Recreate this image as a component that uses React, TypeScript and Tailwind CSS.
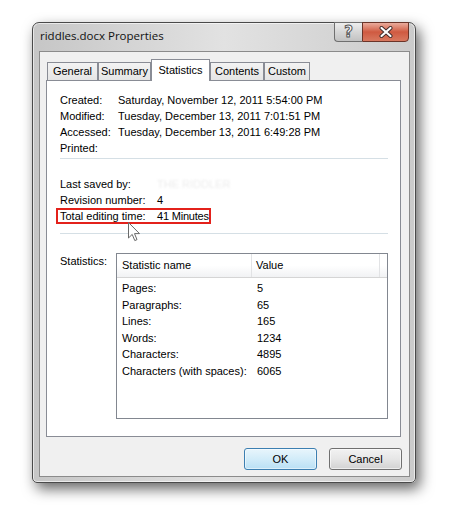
import React from "react";

const tabs = [
  { name: "General", w: "w-[51px]" },
  { name: "Summary", w: "w-[53px]" },
  { name: "Statistics", w: "w-[59px]", active: true },
  { name: "Contents", w: "w-[54px]" },
  { name: "Custom", w: "w-[46px]" },
];

const dates = [
  ["Created:", "Saturday, November 12, 2011 5:54:00 PM"],
  ["Modified:", "Tuesday, December 13, 2011 7:01:51 PM"],
  ["Accessed:", "Tuesday, December 13, 2011 6:49:28 PM"],
  ["Printed:", ""],
];

const stats = [
  ["Pages:", "5"],
  ["Paragraphs:", "65"],
  ["Lines:", "165"],
  ["Words:", "1234"],
  ["Characters:", "4895"],
  ["Characters (with spaces):", "6065"],
];

const Cursor = () => (
  <svg width="13" height="20" viewBox="0 0 13 20" className="absolute left-[128px] top-[222px]">
    <path
      d="M0.5 0.5 L0.5 16 L4.2 12.4 L6.8 18.6 L9 17.6 L6.5 11.6 L11.5 11.6 Z"
      fill="#ffffff"
      stroke="#6a6a6a"
      strokeWidth="1"
      strokeLinejoin="round"
    />
  </svg>
);

const CaptionButtons = () => (
  <div className="-mt-px mr-[6px] flex">
    <div className="flex h-[20px] w-[28px] items-center justify-center rounded-bl-[4px] border border-r-0 border-[#6f6f6f] bg-gradient-to-b from-[#eeeeee] via-[#d6d6d6] to-[#c2c2c2]">
      <span className="text-[15px] font-bold leading-none text-white [-webkit-text-stroke:1px_#555555] [font-family:'DejaVu_Sans',sans-serif]">
        ?
      </span>
    </div>
    <div className="flex h-[20px] w-[47px] items-center justify-center rounded-br-[4px] border border-[#6b3428] bg-gradient-to-b from-[#e9ab9c] via-[#cf5a41] to-[#d8785f]">
      <svg width="14" height="12" viewBox="0 0 14 12">
        <path d="M2.5 2 L11.5 10 M11.5 2 L2.5 10" stroke="#3b2a2a" strokeWidth="4" strokeLinecap="round" />
        <path d="M2.5 2 L11.5 10 M11.5 2 L2.5 10" stroke="#ffffff" strokeWidth="2.2" strokeLinecap="round" />
      </svg>
    </div>
  </div>
);

export default function App() {
  return (
    <div className="relative h-[511px] w-[461px] bg-white pl-[32px] pt-[22px] font-['Liberation_Sans',Arial,sans-serif] text-[11px] text-black">
      <div className="flex h-[461px] w-[384px] flex-col rounded-t-[7px] rounded-b-[5px] border border-[#4a4a4a] bg-gradient-to-r from-[#c6c6c6] via-[#e2e2e2] to-[#cbcbcb] shadow-[4px_6px_14px_rgba(0,0,0,0.6),inset_0_0_0_1px_rgba(255,255,255,0.6)]">
        {/* title bar */}
        <div className="flex h-[28px] items-start justify-between">
          <span className="ml-[7px] mt-[5px] font-['Open_Sans','Noto_Sans',sans-serif] text-[11.5px] leading-[16px] text-[#111]">
            riddles.docx Properties
          </span>
          <CaptionButtons />
        </div>

        {/* client area */}
        <div className="ml-[6px] flex h-[426px] w-[371px] flex-col border border-[#8b8b8b] bg-[#f0f0f0]">
          <div className="relative z-10 flex h-[29px] items-end pl-[7px] pt-[7px]">
            {tabs.map((t) =>
              t.active ? (
                <div
                  key={t.name}
                  className={`${t.w} flex h-[22px] justify-center border border-b-0 border-[#898c95] bg-white pt-[2px] leading-[16px]`}
                >
                  {t.name}
                </div>
              ) : (
                <div
                  key={t.name}
                  className={`${t.w} mb-px flex h-[18px] items-center justify-center border border-b-0 border-[#898c95] bg-gradient-to-b from-[#f3f3f3] to-[#e5e5e5]`}
                >
                  {t.name}
                </div>
              )
            )}
          </div>

          <div className="-mt-px ml-[6px] flex h-[357px] w-[355px] flex-col border border-[#898c95] bg-white pl-[13px] pt-[11px]">
            {dates.map(([k, v]) => (
              <div key={k} className="flex h-[16px] items-center">
                <span className="w-[58px]">{k}</span>
                <span>{v}</span>
              </div>
            ))}
            <div className="mt-[2px] h-px w-[328px] bg-[#d5dfe5]" />

            <div className="mt-[17px] flex h-[16px] items-center">
              <span className="w-[97px]">Last saved by:</span>
              <span className="text-[#ececec] blur-[1px]">THE RIDDLER</span>
            </div>
            <div className="flex h-[16px] items-center">
              <span className="w-[97px]">Revision number:</span>
              <span>4</span>
            </div>
            <div className="-ml-[4px] flex h-[16px] items-center self-start border-2 border-[#e3211b] pl-[2px]">
              <span className="w-[97px]">Total editing time:</span>
              <span className="tracking-[-0.2px]">41 Minutes</span>
            </div>
            <div className="mt-[9px] h-px w-[328px] bg-[#d5dfe5]" />

            <div className="mt-[19px] flex items-start">
              <span className="w-[56px] leading-[16px]">Statistics:</span>
              <div className="flex h-[166px] w-[272px] flex-col border border-[#828790] bg-white">
                <div className="flex h-[24px] border-b border-[#d5d5d5] bg-gradient-to-b from-white via-white to-[#f1f2f4]">
                  <div className="flex w-[135px] items-center border-r border-[#e2e3e5] pl-[5px]">
                    Statistic name
                  </div>
                  <div className="flex w-[128px] items-center border-r border-[#e2e3e5] pl-[4px]">
                    Value
                  </div>
                </div>
                <div className="pt-[2px]">
                  {stats.map(([k, v]) => (
                    <div key={k} className="flex h-[16.6px] items-center">
                      <span className="w-[135px] pl-[5px]">{k}</span>
                      <span className="pl-[5px]">{v}</span>
                    </div>
                  ))}
                </div>
              </div>
            </div>
          </div>

          <div className="mt-[11px] flex justify-end gap-[12px] pr-[7px]">
            <button className="h-[22px] w-[73px] rounded-[3px] border border-[#3c7fb1] bg-gradient-to-b from-[#e8f5fc] via-[#d2ecf9] to-[#b9e0f5] shadow-[inset_0_0_0_1px_rgba(255,255,255,0.5)]">
              OK
            </button>
            <button className="h-[22px] w-[73px] rounded-[3px] border border-[#707070] bg-gradient-to-b from-[#f2f2f2] via-[#e6e6e6] to-[#d2d2d2] shadow-[inset_0_0_0_1px_rgba(255,255,255,0.6)]">
              Cancel
            </button>
          </div>
        </div>
      </div>
      <Cursor />
    </div>
  );
}
